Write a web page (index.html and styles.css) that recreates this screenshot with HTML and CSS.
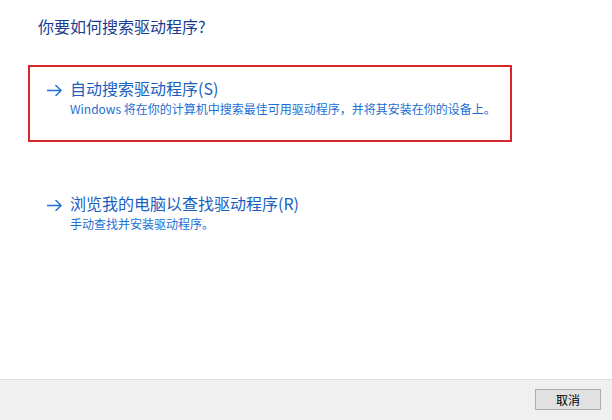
FILE: index.html
```html
<!DOCTYPE html>
<html lang="zh-CN">
<head>
    <meta charset="UTF-8" />
    <title>更新驱动程序</title>
    <link rel="stylesheet" href="styles.css">
</head>
<body>
<main class="dialog">
    <section class="content">
        <h1 class="title">你要如何搜索驱动程序?</h1>

        <div class="option selected">
            <svg class="arrow" width="16" height="12" viewBox="0 0 16 12">
                <path d="M1 6.5H15M9.5 1L15 6.5L9.5 12" fill="none" stroke="#1a6fd4" stroke-width="1.4"/>
            </svg>
            <div class="option-text">
                <div class="option-head">自动搜索驱动程序(S)</div>
                <div class="option-desc">Windows 将在你的计算机中搜索最佳可用驱动程序，并将其安装在你的设备上。</div>
            </div>
        </div>

        <div class="option">
            <svg class="arrow" width="16" height="12" viewBox="0 0 16 12">
                <path d="M1 6.5H15M9.5 1L15 6.5L9.5 12" fill="none" stroke="#1a6fd4" stroke-width="1.4"/>
            </svg>
            <div class="option-text">
                <div class="option-head">浏览我的电脑以查找驱动程序(R)</div>
                <div class="option-desc">手动查找并安装驱动程序。</div>
            </div>
        </div>
    </section>

    <footer class="footer">
        <button class="cancel-btn">取消</button>
    </footer>
</main>
</body>
</html>
```

FILE: styles.css
```css
* {
    box-sizing: border-box;
}
body {
    margin: 0;
    background: #fff;
    font-family: "Noto Sans CJK SC", "Noto Sans", sans-serif;
}
.dialog {
    width: 612px;
    height: 420px;
    display: flex;
    flex-direction: column;
}
.content {
    flex: 1;
    padding: 15px 0 0 28px;
}
.title {
    margin: 0 0 28px 10px;
    font-size: 16px;
    line-height: 22px;
    font-weight: normal;
    color: #1c3c90;
}
.option {
    width: 484px;
    height: 77px;
    border: 2px solid transparent;
    padding: 10px 0 0 16px;
    display: flex;
    gap: 8px;
    margin-bottom: 38px;
}
.option.selected {
    border-color: #d9262b;
}
.arrow {
    margin-top: 7px;
    flex: none;
}
.option-head {
    font-size: 16px;
    line-height: 23px;
    color: #1a5fc0;
}
.option-desc {
    font-size: 12px;
    line-height: 18px;
    color: #1a6fd4;
}
.footer {
    height: 41px;
    background: #f0f0f0;
    border-top: 1px solid #dfdfdf;
    display: flex;
    justify-content: flex-end;
    padding: 9px 11px 0 0;
}
.cancel-btn {
    width: 66px;
    height: 21px;
    padding: 0;
    background: #e1e1e1;
    border: 1px solid #adadad;
    border-radius: 0;
    font-family: "Noto Sans CJK SC", sans-serif;
    font-size: 12px;
    color: #000;
}
```
